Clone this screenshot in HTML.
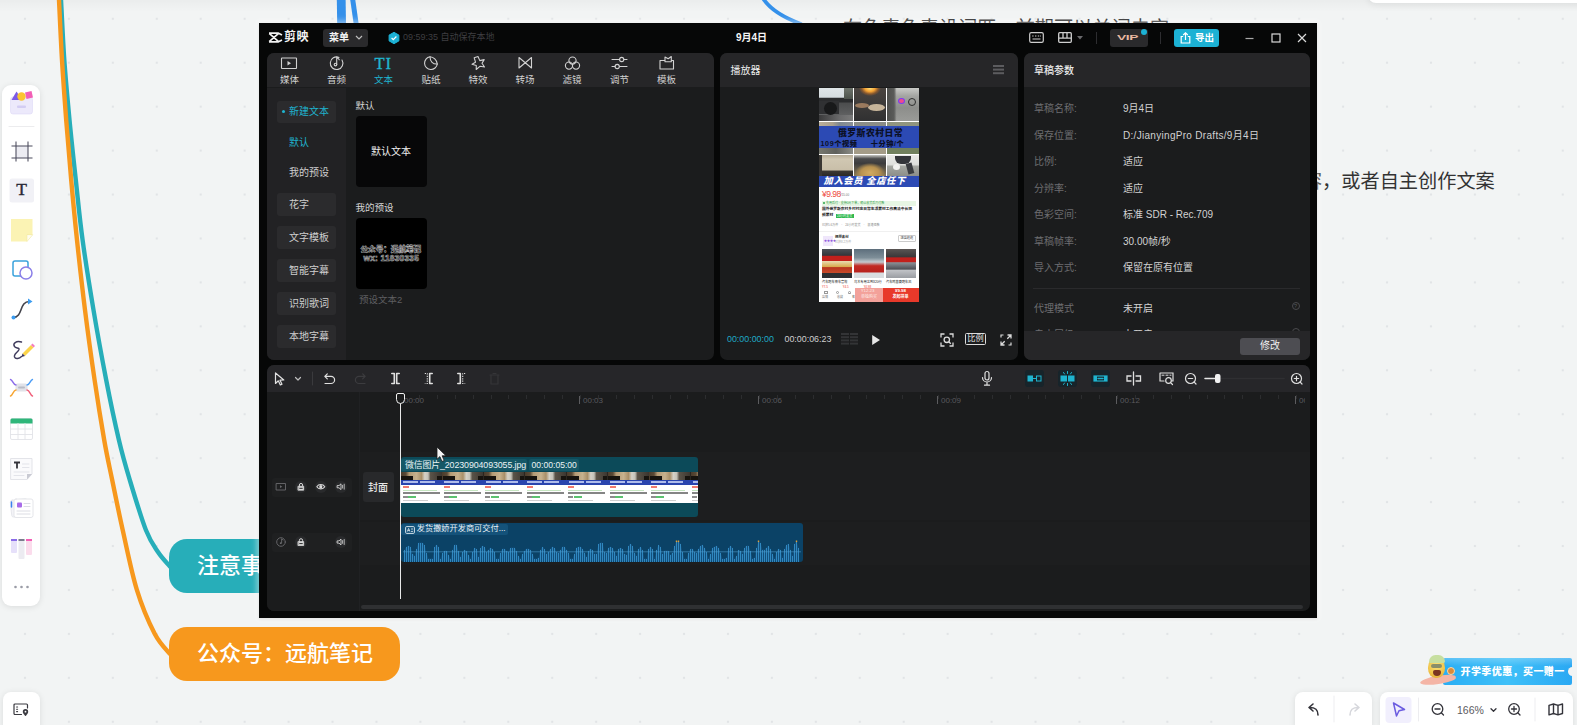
<!DOCTYPE html>
<html lang="zh-CN">
<head>
<meta charset="utf-8">
<title>剪映 - 9月4日</title>
<style>
*{box-sizing:border-box;margin:0;padding:0}
html,body{width:1577px;height:725px;overflow:hidden}
body{position:relative;background-color:#f2f4f4;font-family:"Liberation Sans","Noto Sans CJK SC",sans-serif;
background-image:radial-gradient(circle,#e1e4e6 0,#e1e4e6 .9px,rgba(225,228,230,0) 1.6px);background-size:43.94px 43.94px;background-position:3.0px -3.2px}
.a{position:absolute}
.t{position:absolute;white-space:nowrap;line-height:1}
svg{position:absolute;overflow:visible}
/* ---------- board ---------- */
.card{position:absolute;background:#fff;border-radius:8px;box-shadow:0 1px 6px rgba(0,0,0,.10)}
.node{position:absolute;color:#fff;font-size:22px;font-weight:500;line-height:53px;height:54.5px;padding-left:28.5px;white-space:nowrap}
/* ---------- app window ---------- */
#win{left:259px;top:23px;width:1058px;height:595px;background:#060707;box-shadow:0 0 6px 2px rgba(255,255,255,.5),0 1px 3px rgba(0,0,0,.15)}
.pn{position:absolute;background:#1b1c1d;border-radius:7px;overflow:hidden}
.hd{position:absolute;left:0;top:0;right:0;height:34.4px;background:#262628}
.w{color:#e6e6e6}.g{color:#6d6d70}.c{color:#1fb4cf}
.f10{font-size:10px}.f95{font-size:9.5px}
.sb{position:absolute;left:10px;width:59px;height:22px;background:#2b2b2d;border-radius:3px}
</style>
</head>
<body>
<!-- BOARD -->
<div id="board" class="a" style="left:0;top:0;width:1577px;height:725px">
<div class="a" style="left:0;top:0;width:1577px;height:12px;background:linear-gradient(180deg,rgba(0,0,0,.03),rgba(0,0,0,0))"></div>
<!-- mind map connectors -->
<svg width="1577" height="725" style="left:0;top:0" fill="none" stroke-linecap="round">
  <path d="M60.3,-10.0 C60.4,-8.3 60.3,-11.7 61.0,0.0 C61.7,11.7 62.9,40.0 64.3,60.0 C65.7,80.0 67.6,100.0 69.5,120.0 C71.4,140.0 73.6,160.0 75.8,180.0 C78.0,200.0 79.6,218.3 82.6,240.0 C85.5,261.7 89.6,286.7 93.5,310.0 C97.4,333.3 102.0,358.3 106.2,380.0 C110.4,401.7 115.0,423.3 118.9,440.0 C122.8,456.7 125.3,465.0 129.8,480.0 C134.3,495.0 141.2,518.0 145.9,530.0 C150.6,542.0 154.0,545.9 158.0,552.0 C162.0,558.1 168.0,564.1 170.0,566.5" stroke="#27aeb9" stroke-width="4.4"/>
  <path d="M58.6,-10.0 C58.7,-8.3 58.4,-11.7 59.0,0.0 C59.6,11.7 60.8,40.0 62.0,60.0 C63.2,80.0 64.7,100.0 66.2,120.0 C67.7,140.0 69.4,160.0 71.2,180.0 C73.0,200.0 74.7,218.3 77.0,240.0 C79.3,261.7 82.1,286.7 85.0,310.0 C87.9,333.3 91.4,358.3 94.6,380.0 C97.8,401.7 101.3,423.3 104.2,440.0 C107.1,456.7 109.1,465.0 112.2,480.0 C115.3,495.0 118.6,511.7 122.7,530.0 C126.8,548.3 131.5,572.3 136.8,589.6 C142.1,606.9 149.2,623.1 154.7,633.8 C160.2,644.5 167.4,650.6 170.0,654.0" stroke="#f7981d" stroke-width="4.4"/>
  <path d="M341.2,-2 L341.6,24" stroke="#3490ea" stroke-width="8.8" stroke-linecap="butt"/>
  <path d="M352.5,-2 L356.2,24" stroke="#3490ea" stroke-width="5" stroke-linecap="butt"/>
  <path d="M762.8,-2 C769,8 782,17 801,24" stroke="#3490ea" stroke-width="3.8"/>
</svg>
<!-- hidden-behind-window text lines -->
<div class="t" style="left:843px;top:19.2px;font-size:19.2px;color:#222">在免责免责设词匹，前期可以关词去字</div>
<div class="t" style="left:1207px;top:171.5px;font-size:19.2px;color:#333;letter-spacing:0">选择文案内容，或者自主创作文案</div>
<!-- top right floating shadow -->
<div class="card" style="left:1368px;top:-27px;width:230px;height:30px;box-shadow:0 2px 7px rgba(0,0,0,.07)"></div>
<!-- nodes -->
<div class="node" style="left:168.5px;top:538.5px;width:300px;background:#27aeb9;border-radius:18px">注意事项</div>
<div class="node" style="left:168.5px;top:626.5px;width:231.5px;background:#f7981d;border-radius:18px">公众号：远航笔记</div>
<!-- left toolbar -->
<div class="card" style="left:2px;top:84.500px;width:38px;height:521px;border-radius:9px"></div>
<div class="card" style="left:3px;top:692px;width:37px;height:40px"></div>
<!-- bottom right -->
<div class="card" style="left:1295px;top:692px;width:77px;height:40px"></div>
<div class="card" style="left:1380px;top:692px;width:193px;height:40px"></div>
<!-- left toolbar icons -->
<svg style="left:3px;top:83px" width="37" height="522" viewBox="0 0 37 522" fill="none" stroke-linecap="round" stroke-linejoin="round">
  <!-- shapes library -->
  <rect x="7.500" y="14" width="22" height="17" rx="2.500" fill="#ece9fb" stroke="#ded9f6" stroke-width=".6"/>
  <rect x="14" y="22.500" width="9" height="2.500" rx="1" fill="#d3cdf3"/>
  <path d="M8.500,17 L13.500,8.500 L19,17 Z" fill="#7d5be6"/><circle cx="18.500" cy="13.500" r="4.200" fill="#fbc531"/><path d="M22,9.500 L28.500,8 L30,14.500 L23.500,16 Z" fill="#f25fb6"/>
  <path d="M6,43.500 H31" stroke="#ececee" stroke-width="1"/>
  <!-- frame -->
  <rect x="13" y="63" width="12" height="12" fill="#ececf2" stroke="none"/>
  <path d="M13,58.500 V78.500 M25,58.500 V78.500 M8.500,63 H29.500 M8.500,75 H29.500" stroke="#4a4a5c" stroke-width="1.050" stroke-linecap="butt"/>
  <!-- text T -->
  <rect x="6.500" y="95.500" width="24.500" height="24" rx="2.500" fill="#f1f1f6"/>
  <!-- sticky -->
  <path d="M8,136 H29.500 V152 L24,158.500 H8 Z" fill="#fbf3b4"/><path d="M29.500,152 L24,158.500 V152 Z" fill="#fffdf0" stroke="#efe6a0" stroke-width=".5"/>
  <!-- shapes -->
  <rect x="10" y="178" width="15" height="15" rx="2" stroke="#3aa2dc" stroke-width="1.500" fill="#fff"/><circle cx="23" cy="190" r="6" stroke="#8b7fe8" stroke-width="1.500" fill="#fff"/>
  <!-- connector -->
  <path d="M10.500,234.500 C20,234.500 16,218.500 26.500,218.500" stroke="#44444c" stroke-width="1.600"/><circle cx="10.500" cy="234.500" r="2" fill="#3b9cf0"/><path d="M25,215.500 L29.500,218.500 L25,221.500 Z" fill="#3b9cf0"/>
  <!-- pen -->
  <path d="M18.500,259 C13,257.500 9.500,260.500 11.500,263.500 C13,265.500 16.500,264.500 16,266.500 C15,269.500 10.500,270.500 11.500,274 C12.500,276.500 16.500,275.500 18.500,273.500" stroke="#3f3b5c" stroke-width="1.400"/>
  <path d="M19.500,270.500 L28,262 L30.500,264.500 L22,273 Z" fill="#fbd34a"/><path d="M28,262 L29.500,260.500 L32,263 L30.500,264.500 Z" fill="#f47cc0"/><path d="M19.500,270.500 L18.500,274 L22,273 Z" fill="#3a3560"/>
  <!-- mind map -->
  <rect x="12.500" y="300.500" width="12" height="8" rx="2" fill="#e1e2e8"/><rect x="15" y="303.500" width="7" height="2" rx="1" fill="#b9bbc6"/>
  <path d="M13,302 C10,302 10,297 7.500,296.500" stroke="#8a6be8" stroke-width="1.400"/><path d="M24,302 C27,302 27,297 29.500,296.500" stroke="#4b9cf5" stroke-width="1.400"/>
  <path d="M13,307 C10,307 10,312.500 7.500,313" stroke="#f7a531" stroke-width="1.400"/><path d="M24,307 C27,307 27,312.500 29.500,313" stroke="#f0607a" stroke-width="1.400"/>
  <!-- table -->
  <rect x="7.500" y="335.500" width="22" height="21" rx="1.500" fill="#fff" stroke="#e2e3e8" stroke-width=".9"/><path d="M7.500,337 A1.500,1.500 0 0 1 9,335.500 H28 A1.500,1.500 0 0 1 29.500,337 V340.500 H7.500 Z" fill="#2fb67a"/>
  <path d="M7.500,346 H29.500 M7.500,351.500 H29.500 M15,340.500 V356.500 M22,340.500 V356.500" stroke="#e2e3e8" stroke-width=".9"/>
  <!-- doc -->
  <path d="M8,375.500 H29 V391 L24,396.500 H8 Z" fill="#fafafc" stroke="#e0e1e7" stroke-width=".9"/><path d="M29,391 L24,396.500 V391 Z" fill="#c9cad3"/>
  <path d="M11,379.500 H17 M14,379.500 V385.500" stroke="#33333a" stroke-width="1.800" stroke-linecap="butt"/><path d="M19.500,381 H26 M19.500,384.500 H26 M11,389 H26 M11,392.500 H21" stroke="#e3e4ea" stroke-width="1"/>
  <!-- cards -->
  <rect x="8" y="416.500" width="17" height="17" rx="2" fill="#f4f4f8" stroke="#e2e3e8" stroke-width=".8" transform="rotate(-6 16 425)"/><rect x="11" y="416" width="19" height="18.500" rx="2" fill="#fff" stroke="#e2e3e8" stroke-width=".9"/>
  <rect x="14" y="419.500" width="5" height="5" rx="1" fill="#a86be8"/><path d="M8.500,419 V424" stroke="#3b82f0" stroke-width="1.500"/><path d="M21,420.500 H27 M21,423.500 H27 M14,428 H27 M14,431 H27" stroke="#dcdde4" stroke-width="1"/>
  <!-- kanban -->
  <rect x="8" y="456" width="6" height="14" rx="1" fill="#e6e0fa"/><rect x="15.500" y="456" width="6" height="20" rx="1" fill="#ecebf1"/><rect x="23" y="456" width="6" height="16" rx="1" fill="#fbdcec"/>
  <path d="M8,457 H14" stroke="#8a6be8" stroke-width="2" stroke-linecap="butt"/><path d="M15.500,457 H21.500" stroke="#7a7c8c" stroke-width="2" stroke-linecap="butt"/><path d="M23,457 H29" stroke="#f25fb6" stroke-width="2" stroke-linecap="butt"/>
  <!-- more -->
  <circle cx="12.500" cy="504" r="1.300" fill="#9a9ca6"/><circle cx="18.500" cy="504" r="1.300" fill="#9a9ca6"/><circle cx="24.500" cy="504" r="1.300" fill="#9a9ca6"/>
</svg>
<div class="t" style="left:16.200px;top:181.300px;font-family:'Liberation Serif',serif;font-weight:400;font-size:17.500px;color:#2a2a36;-webkit-text-stroke:.4px #2a2a36">T</div>
<!-- bottom-left button -->
<svg style="left:12px;top:702px" width="18" height="15" viewBox="0 0 18 15" fill="none" stroke="#3a3a40" stroke-width="1.200" stroke-linejoin="round" stroke-linecap="round"><path d="M9.500,12.500 H3 A1,1 0 0 1 2,11.500 V3 A1,1 0 0 1 3,2 H14.500 A1,1 0 0 1 15.500,3 V6"/><path d="M4.600,5 H5.600 M4.600,7.300 H5.600 M4.600,9.600 H5.600" stroke-width="1.100"/><path d="M13.500,7 A2.700,2.700 0 0 1 16.200,9.700 C16.200,11.500 13.500,14 13.500,14 C13.500,14 10.800,11.500 10.800,9.700 A2.700,2.700 0 0 1 13.500,7 Z" fill="#3a3a40" stroke="none"/><circle cx="13.500" cy="9.700" r=".9" fill="#fff" stroke="none"/></svg>
<!-- bottom-right toolbars -->
<svg style="left:1295px;top:692px" width="280" height="33" viewBox="0 0 280 33" fill="none" stroke="#33333a" stroke-width="1.600" stroke-linecap="round" stroke-linejoin="round">
  <path d="M39,4 V30" stroke="#ededf0" stroke-width="1"/>
  <path d="M23,23 C23,17.500 20.500,15.500 14.500,15.500 M18,12 L14,15.500 L18,19"/>
  <path d="M55,23 C55,17.500 57.500,15.500 63.500,15.500 M60,12 L64,15.500 L60,19" stroke="#d6d7dc"/>
  <rect x="90.500" y="5" width="26" height="26" rx="4" fill="#f1effd" stroke="none"/>
  <path d="M98.500,11 L109.500,17.500 L104,18.800 L101.500,24 Z" stroke="#6b5ce0" stroke-width="1.500"/>
  <path d="M123.500,6 V29" stroke="#ededf0" stroke-width="1"/>
  <circle cx="142.500" cy="17" r="5.300" stroke-width="1.300"/><path d="M140,17 H145 M146.500,21 L148.500,23" stroke-width="1.300"/>
  <path d="M196,16.800 L198.500,19.300 L201,16.800" stroke-width="1.300"/>
  <circle cx="219" cy="17" r="5.300" stroke-width="1.300"/><path d="M216.500,17 H221.500 M219,14.500 V19.500 M223,21 L225,23" stroke-width="1.300"/>
  <path d="M240,6 V29" stroke="#ededf0" stroke-width="1"/>
  <path d="M254,13.300 L258.500,12 L263,13.300 L267.500,12 V21.500 L263,22.800 L258.500,21.500 L254,22.800 Z M258.500,12 V21.500 M263,13.300 V22.800" stroke-width="1.400"/>
</svg>
<div class="t" style="left:1457px;top:705px;font-size:10.500px;color:#5a5a60">166%</div>
<!-- promo banner -->
<div class="a" style="left:1443px;top:658px;width:129px;height:27px;border-radius:2px;background:linear-gradient(180deg,rgba(255,255,255,.25) 0,rgba(255,255,255,0) 30%),linear-gradient(90deg,#2aaef4 0,#3fc0f8 50%,#2aa8f3 100%)"></div>
<div class="a" style="left:1420px;top:676px;width:36px;height:8px;border-radius:60% 50% 50% 60%;background:#f4b5a6;transform:rotate(-9deg)"></div>
<div class="a" style="left:1428px;top:657px;width:17px;height:21px;border-radius:50% 50% 45% 45%;background:radial-gradient(circle at 50% 40%,#fae27c 0,#f0c347 60%,#d9a03a 100%)"></div>
<div class="a" style="left:1428.500px;top:654.500px;width:16px;height:8px;border-radius:9px 9px 2px 2px;background:#c7dfa0"></div>
<div class="a" style="left:1431px;top:663.500px;width:11px;height:4px;border-radius:2px;background:#8a8f6a"></div>
<div class="a" style="left:1433px;top:670px;width:8px;height:6px;border-radius:2px 2px 4px 4px;background:#7a3422"></div>
<div class="a" style="left:1446.500px;top:666.500px;width:8px;height:8px;border-radius:4px;background:#d98a3a;border:1px solid #f6dcae"></div>
<div class="t" style="left:1460.500px;top:666.500px;font-size:10px;font-weight:900;color:#fff;letter-spacing:.42px">开学季优惠，买一赠一</div>
<div class="a" style="left:1568px;top:667px;width:6px;height:9px;border-radius:5px 0 0 5px;background:#f2f4f4"></div>
</div>
<!-- WINDOW -->
<div id="win" class="a"></div>
<div id="app" class="a" style="left:0;top:0;width:1577px;height:725px">
<!-- ===== title bar ===== -->
<svg style="left:268px;top:32px" width="15" height="11" viewBox="0 0 15 11" fill="none" stroke="#f2f2f2" stroke-width="1.7" stroke-linejoin="round"><path d="M1,1.2 H10.5 L14,3 M1,9.8 H10.5 L14,8 M1.2,1.3 L10.6,9.6 M1.2,9.7 L10.6,1.4"/></svg>
<div class="t" style="left:284px;top:31px;font-size:12px;font-weight:700;color:#f2f2f2;letter-spacing:.5px">剪映</div>
<div class="a" style="left:323px;top:29px;width:45px;height:18px;background:#2a2a2c;border-radius:3px"></div>
<div class="t" style="left:329px;top:32.5px;font-size:10px;font-weight:700;color:#f2f2f2">菜单</div>
<svg style="left:355px;top:35px" width="8" height="5" viewBox="0 0 8 5" fill="none" stroke="#bdbdbd" stroke-width="1.2"><path d="M1,1 L4,4 L7,1"/></svg>
<svg style="left:388px;top:32px" width="12" height="12" viewBox="0 0 12 12"><path d="M6,0.3 L10.9,3.1 V8.9 L6,11.7 L1.1,8.9 V3.1 Z" fill="#1cb1d4" stroke="#1cb1d4" stroke-width="1" stroke-linejoin="round"/><path d="M3.6,6 L5.3,7.7 L8.4,4.5" fill="none" stroke="#fff" stroke-width="1.2"/></svg>
<div class="t" style="left:403px;top:33px;font-size:9px;color:#3e3e41">09:59:35 自动保存本地</div>
<div class="t" style="left:736px;top:32.5px;font-size:10px;font-weight:700;color:#f5f5f5">9月4日</div>
<!-- right icons -->
<svg style="left:1029px;top:32px" width="15" height="11" viewBox="0 0 15 11" fill="none" stroke="#cfcfcf" stroke-width="1.2"><rect x=".7" y=".7" width="13.6" height="9.6" rx="1.6"/><path d="M3.2,4 H4.6 M6,4 H7.4 M8.8,4 H10.2 M11.2,4 H12 M3.5,7 H11.5" stroke-width="1.1"/></svg>
<svg style="left:1058px;top:32px" width="14" height="11" viewBox="0 0 14 11" fill="none" stroke="#cfcfcf" stroke-width="1.3"><rect x=".7" y=".7" width="12.6" height="9.6" rx="1"/><path d="M.7,6.2 H13.3 M5,.7 V6.2 M9,.7 V6.2"/></svg>
<svg style="left:1077px;top:36px" width="6" height="4" viewBox="0 0 6 4"><path d="M0,0 H6 L3,3.6 Z" fill="#6a6a6d"/></svg>
<div class="a" style="left:1096px;top:32px;width:1px;height:12px;background:#2d2d30"></div>
<div class="a" style="left:1110px;top:29px;width:38px;height:18px;background:#2a2a2c;border-radius:3px"></div>
<div class="t" style="left:1117px;top:33.8px;font-size:8px;font-weight:700;color:#e9b8a0;letter-spacing:-.2px;transform:scaleX(1.72);transform-origin:0 0">VIP</div>
<div class="a" style="left:1141px;top:29px;width:6px;height:6px;border-radius:3px;background:#1cb1d4"></div>
<div class="a" style="left:1160px;top:32px;width:1px;height:12px;background:#2d2d30"></div>
<div class="a" style="left:1174px;top:29px;width:45px;height:18px;background:#1cb1d4;border-radius:3px"></div>
<svg style="left:1180px;top:32px" width="11" height="12" viewBox="0 0 11 12" fill="none" stroke="#fff" stroke-width="1.2"><path d="M3.2,4.5 H1.2 V11 H9.8 V4.5 H7.8 M5.5,8 V1 M3.2,3 L5.5,.8 L7.8,3"/></svg>
<div class="t" style="left:1195px;top:33px;font-size:9.5px;font-weight:700;color:#fff">导出</div>
<svg style="left:1243px;top:31px" width="66" height="14" viewBox="0 0 66 14" fill="none" stroke="#d9d9d9" stroke-width="1.2"><path d="M2.5,7.5 H10.5" stroke="#a8a8a8"/><rect x="29" y="3" width="8" height="8"/><path d="M55,3 L63,11 M63,3 L55,11"/></svg>
<!-- ===== left panel (media / text) ===== -->
<div class="pn" style="left:267px;top:52.6px;width:447px;height:307.4px">
  <div class="hd"></div>
  <div class="a" style="left:0;top:35px;width:79px;height:273px;background:#222224"></div>
  <!-- side menu -->
  <div class="sb" style="top:48px"></div>
  <div class="a" style="left:15px;top:57.5px;width:3px;height:3px;border-radius:2px;background:#1fb4cf"></div>
  <div class="t c f10" style="left:22px;top:54px">新建文本</div>
  <div class="t c f10" style="left:22px;top:85.5px">默认</div>
  <div class="t f10" style="left:22px;top:115px;color:#cfcfcf">我的预设</div>
  <div class="sb" style="top:140.5px;height:23px"></div><div class="t f10" style="left:22px;top:147.3px;color:#cfcfcf">花字</div>
  <div class="sb" style="top:173.5px;height:23px"></div><div class="t f10" style="left:22px;top:180.3px;color:#cfcfcf">文字模板</div>
  <div class="sb" style="top:206.5px;height:23px"></div><div class="t f10" style="left:22px;top:213.3px;color:#cfcfcf">智能字幕</div>
  <div class="sb" style="top:239.5px;height:23px"></div><div class="t f10" style="left:22px;top:246.3px;color:#cfcfcf">识别歌词</div>
  <div class="sb" style="top:272.5px;height:23px"></div><div class="t f10" style="left:22px;top:279.3px;color:#cfcfcf">本地字幕</div>
  <!-- content -->
  <div class="t" style="left:88.5px;top:48.8px;font-size:9.5px;color:#d6d6d6">默认</div>
  <div class="a" style="left:88.5px;top:63.8px;width:71.5px;height:71px;background:#070708;border-radius:4px"></div>
  <div class="t" style="left:104px;top:94.8px;font-size:10px;color:#f0f0f0">默认文本</div>
  <div class="t" style="left:88.5px;top:150.8px;font-size:9.5px;color:#d6d6d6">我的预设</div>
  <div class="a" style="left:88.5px;top:165.8px;width:71.5px;height:71px;background:#000;border-radius:4px"></div>
  <div class="t" style="left:93.5px;top:193.3px;font-size:7.7px;font-weight:900;color:#000;-webkit-text-stroke:.55px #b8b8b8;letter-spacing:-.1px">公众号：远航笔记</div>
  <div class="t" style="left:96.5px;top:201.8px;font-size:8.4px;font-weight:700;color:#000;-webkit-text-stroke:.55px #b8b8b8;letter-spacing:.2px">wx: 11830335</div>
  <div class="t" style="left:92px;top:242.8px;font-size:9.5px;color:#5e5e61">预设文本2</div>
</div>
<!-- tabs -->
<div class="t f95" style="left:280px;top:74.5px;color:#d2d2d2">媒体</div>
<div class="t f95" style="left:327px;top:74.5px;color:#d2d2d2">音频</div>
<div class="t f95 c" style="left:374px;top:74.5px">文本</div>
<div class="t f95" style="left:421.5px;top:74.5px;color:#d2d2d2">贴纸</div>
<div class="t f95" style="left:468.5px;top:74.5px;color:#d2d2d2">特效</div>
<div class="t f95" style="left:515.5px;top:74.5px;color:#d2d2d2">转场</div>
<div class="t f95" style="left:562.5px;top:74.5px;color:#d2d2d2">滤镜</div>
<div class="t f95" style="left:610px;top:74.5px;color:#d2d2d2">调节</div>
<div class="t f95" style="left:657px;top:74.5px;color:#d2d2d2">模板</div>
<svg style="left:280px;top:55px" width="400" height="16" viewBox="0 0 400 16" fill="none" stroke="#d2d2d2" stroke-width="1.1" stroke-linejoin="round" stroke-linecap="round">
  <!-- media -->
  <rect x="1.5" y="3" width="15" height="10.5" rx=".5"/><path d="M7.5,6 L11,8.2 L7.5,10.4 Z" fill="#d2d2d2" stroke="none"/>
  <!-- audio -->
  <path d="M59,2.4 A6.3,6.3 0 1 0 62,5"/><path d="M56.7,9.6 V2 C57.5,3.3 59,3.6 59.3,4.8"/><circle cx="55.5" cy="9.6" r="1.3"/>
  <!-- sticker -->
  <path d="M150,1.8 A6.4,6.4 0 1 0 157.3,9 C153,9.3 150,6.5 150,1.8 Z"/><path d="M150,1.8 C153.5,2 156.8,5 157.3,9"/>
  <!-- effects star -->
  <path d="M198,1.5 L199.8,5.6 L204.2,4.6 L202,8.3 L204.5,12 L200.2,11.2 L196.2,14.5 L196.3,10.5 L192,9.2 L195.5,7.2 L194.2,2.8 Z"/>
  <!-- transition -->
  <path d="M239,2.5 L251.5,13 V2.5 L239,13 Z"/>
  <!-- filter -->
  <circle cx="292.5" cy="5.6" r="3.6"/><circle cx="289" cy="10.6" r="3.6"/><circle cx="296" cy="10.6" r="3.6"/>
  <!-- adjust -->
  <path d="M332,4.5 H339.5 M344,4.5 H347 M332,11.5 H335 M339.5,11.5 H347"/><circle cx="341.7" cy="4.5" r="2.1"/><circle cx="337.2" cy="11.5" r="2.1"/>
  <!-- template -->
  <path d="M384.5,5.5 H380 V14 H393.5 V5.5 H391.5 M385,5.3 V2 L388.2,3.8 L391.3,1.5 V6.8 H385 Z"/>
</svg>
<div class="t" style="left:374.5px;top:55.5px;font-family:'Liberation Serif',serif;font-size:16.5px;color:#1fb4cf;letter-spacing:.8px;-webkit-text-stroke:.35px #1fb4cf">TI</div>
<!-- ===== player panel ===== -->
<div class="pn" style="left:720px;top:52.6px;width:298px;height:307.4px">
  <div class="hd"></div>
  <div class="t" style="left:10.5px;top:13.5px;font-size:10px;color:#ededed">播放器</div>
  <div class="a" style="left:273px;top:12.8px;width:11px;height:1.4px;background:#5c5c5f;box-shadow:0 3.6px 0 #5c5c5f,0 7.2px 0 #5c5c5f"></div>
  <!-- preview (x 99..199, y 36..250) -->
  <div class="a" id="pv" style="left:99px;top:35.2px;width:100px;height:214px;background:#fff;overflow:hidden">
    <!-- photo collage top -->
    <div class="a" style="left:0;top:0;width:34px;height:33px;background:linear-gradient(180deg,#dfe5e8 0,#d5dcdf 28%,#2b2c2e 31%,#2b2c2e 42%,#4c4d4e 46%,#58595a 70%,#6b6c6c 100%)"></div>
    <div class="a" style="left:25px;top:0;width:9px;height:11px;background:linear-gradient(180deg,#6d736b,#4d524c)"></div>
    <div class="a" style="left:0;top:13px;width:20px;height:13px;background:#303133"></div>
    <div class="a" style="left:5px;top:14px;width:13px;height:13px;border-radius:50%;background:#18191a"></div>
    <div class="a" style="left:0;top:27px;width:34px;height:6px;background:linear-gradient(90deg,#3a3a3b,#69696a 60%,#7a7a7a)"></div>
    <div class="a" style="left:35px;top:0;width:32px;height:33px;background:radial-gradient(ellipse 11px 8px at 50% 0,#ffe27a 0,#f3a234 45%,rgba(200,110,30,.5) 75%,rgba(60,50,45,0) 100%),linear-gradient(180deg,#4a4440 0,#3d3b3a 50%,#303031 100%)"></div>
    <div class="a" style="left:36px;top:15px;width:14px;height:5px;border-radius:50%;background:#9a7a5e"></div>
    <div class="a" style="left:49px;top:16px;width:17px;height:7px;border-radius:50%;background:#c7b59a"></div>
    <div class="a" style="left:68px;top:0;width:32px;height:33px;background:linear-gradient(90deg,#4e4f4d 0,#5a5b59 22%,rgba(0,0,0,0) 30%),linear-gradient(180deg,#c9cac7 0,#a3a4a1 25%,#8d8e8b 60%,#9a9b98 100%)"></div>
    <div class="a" style="left:78.500px;top:10.500px;width:7px;height:6px;border-radius:50%;background:#7a3df0"></div>
    <div class="a" style="left:80px;top:11.500px;width:5px;height:4px;border-radius:50%;background:#f04a8c"></div>
    <div class="a" style="left:88.500px;top:10px;width:8px;height:8px;border-radius:50%;border:1px solid #2e2f2e"></div>
    <div class="a" style="left:0;top:34px;width:34px;height:5px;background:linear-gradient(90deg,#b9ae9a 0,#a9a08e 40%,#7f8890 60%,#8d9296 100%)"></div>
    <div class="a" style="left:35px;top:34px;width:32px;height:5px;background:#8b8d87"></div>
    <div class="a" style="left:68px;top:34px;width:32px;height:5px;background:#90957f"></div>
    <!-- blue band 1 -->
    <div class="a" style="left:0;top:38.500px;width:100px;height:21.500px;background:#2c4ab4"></div>
    <div class="t" style="left:19px;top:41.200px;font-size:8.800px;font-weight:900;color:#0b1026;letter-spacing:.5px">俄罗斯农村日常</div>
    <div class="t" style="left:1.500px;top:52px;font-size:7.200px;font-weight:900;color:#0b1026;letter-spacing:.6px">109个视频　 &nbsp;十分钟/个</div>
    <!-- photos row 2 -->
    <div class="a" style="left:0;top:60px;width:34px;height:6px;background:linear-gradient(90deg,#77786f,#5f605c 50%,#8b8c86)"></div>
    <div class="a" style="left:35px;top:60px;width:32px;height:6px;background:#a49c88"></div>
    <div class="a" style="left:68px;top:60px;width:32px;height:6px;background:#71805e"></div>
    <div class="a" style="left:0;top:67px;width:34px;height:21.500px;background:linear-gradient(180deg,#b5ab96 0,#d0c7b2 20%,#c9bfa9 70%,#3a3733 78%,#2b2927 100%)"></div>
    <div class="a" style="left:0;top:67px;width:2.500px;height:21.500px;background:#3a3733"></div>
    <div class="a" style="left:35px;top:67px;width:32px;height:21.500px;background:radial-gradient(ellipse 15px 10px at 50% 85%,#d2ab62 0,#b89250 60%,rgba(120,100,70,0) 100%),linear-gradient(180deg,#c9c9c4 0,#4a4a4b 18%,#3c3c3d 40%,#8d7b56 100%)"></div>
    <div class="a" style="left:68px;top:67px;width:32px;height:21.500px;background:linear-gradient(180deg,#e9e9e7 0,#dedfdc 45%,#a3a5a0 55%,#8c8e89 100%)"></div>
    <div class="a" style="left:76px;top:68px;width:16px;height:8px;border-radius:0 0 6px 6px;background:#33353a"></div>
    <div class="a" style="left:88px;top:75px;width:6px;height:11px;background:#3a3c40;transform:rotate(-15deg)"></div>
    <div class="a" style="left:74px;top:76px;width:7px;height:6px;border-radius:50%;background:#f1f1ef"></div>
    <!-- blue band 2 -->
    <div class="a" style="left:0;top:88.500px;width:100px;height:11px;background:#2c4ab4"></div>
    <div class="t" style="left:4.500px;top:89.300px;font-size:9.200px;font-weight:900;font-style:italic;color:#fff;letter-spacing:.7px">加入会员 全店任下</div>
    <!-- price & text -->
    <div class="t" style="left:3px;top:102px;font-size:8.5px;color:#ee4a40;letter-spacing:-.5px">¥9.98</div>
    <div class="t" style="left:21px;top:106px;font-size:3px;color:#777">¥15.00</div>
    <div class="a" style="left:3px;top:113px;width:94px;height:5px;background:#e7f6e4"></div>
    <div class="a" style="left:4px;top:114.5px;width:2px;height:2px;border-radius:1px;background:#2da44a"></div>
    <div class="t" style="left:7px;top:114px;font-size:3px;color:#2f9c46">先用后付 · 支持0元下单，确认收货后再付款</div>
    <div class="t" style="left:3px;top:120.3px;font-size:3.75px;font-weight:700;color:#222">国外俄罗斯农村乡村村庄日常生活素材工作高清中长视</div>
    <div class="t" style="left:3px;top:126.3px;font-size:3.75px;font-weight:700;color:#222">频素材</div>
    <div class="a" style="left:17px;top:126px;width:18px;height:4.5px;background:#2db84d"></div>
    <div class="t" style="left:18px;top:126.8px;font-size:3px;color:#fff">24小时发货</div>
    <div class="t" style="left:3px;top:136px;font-size:3px;color:#888">已拼5.6万件　·　24小时发货　·　极速退款</div>
    <div class="a" style="left:0;top:143px;width:100px;height:1.5px;background:#f0f0f0"></div>
    <div class="a" style="left:4px;top:148px;width:10px;height:10px;background:#efe6fb"></div>
    <div class="t" style="left:5px;top:152px;font-size:3px;color:#8b52dd">★★★★</div>
    <div class="t" style="left:16px;top:148px;font-size:3.4px;font-weight:700;color:#222">拥原素材</div>
    <div class="t" style="left:16px;top:153.5px;font-size:3px;color:#aaa">已拼8.2万件</div>
    <div class="a" style="left:79px;top:147.5px;width:18px;height:7px;border:.5px solid #ccc;border-radius:1px"></div>
    <div class="t" style="left:81.5px;top:149.5px;font-size:3.2px;color:#333">进店逛逛</div>
    <!-- products -->
    <div class="a" style="left:3px;top:161px;width:30px;height:29px;background:linear-gradient(180deg,#4d5157 0,#33363b 22%,#c2201c 24%,#c2201c 40%,#e8d9b0 42%,#d8a84a 62%,#b9341f 64%,#c64a2a 82%,#2d2f33 84%)"></div>
    <div class="a" style="left:35px;top:161px;width:30px;height:29px;background:linear-gradient(180deg,#5d6e7c 0,#7e8e98 30%,#c4cbd0 45%,#c22a24 58%,#b8221e 80%,#d9dde0 82%)"></div>
    <div class="a" style="left:67px;top:161px;width:30px;height:29px;background:linear-gradient(180deg,#5a5554 0,#3a3738 28%,#c2201c 30%,#c2201c 45%,#8a8f96 47%,#4d4f55 70%,#c2c4c8 72%,#9a9da3 100%)"></div>
    <div class="t" style="left:3px;top:193.5px;font-size:3.2px;color:#222">汽车跑车豪车音效</div>
    <div class="t" style="left:35px;top:193.5px;font-size:3.2px;color:#222">乌木专用达到320行</div>
    <div class="t" style="left:67px;top:193.5px;font-size:3.2px;color:#222">汽车鸣笛赛跑车风</div>
    <div class="t" style="left:3px;top:198.5px;font-size:3px;color:#ee3a30">¥7.5　　　　　¥4.5　　　　　¥4.98</div>
    <!-- bottom bar -->
    <div class="a" style="left:0;top:200px;width:100px;height:14px;background:#fff"></div>
    <div class="t" style="left:3px;top:208.5px;font-size:3px;color:#777">店铺　　　收藏　　　客服</div>
    <div class="a" style="left:5px;top:203px;width:3.5px;height:3.5px;border:.5px solid #999"></div>
    <div class="a" style="left:16.5px;top:203px;width:3.5px;height:3.5px;border:.5px solid #999;border-radius:2px"></div>
    <div class="a" style="left:28.5px;top:203px;width:3.5px;height:3.5px;border:.5px solid #999;border-radius:2px 2px 0 0"></div>
    <div class="a" style="left:36px;top:200px;width:28px;height:14px;background:#f3a19a"></div>
    <div class="a" style="left:64px;top:200px;width:36px;height:14px;background:#e8392a"></div>
    <div class="t" style="left:42px;top:201.5px;font-size:4.4px;color:#fde9e6">¥12.23</div>
    <div class="t" style="left:42px;top:207px;font-size:4px;color:#fde9e6">单独购买</div>
    <div class="t" style="left:76px;top:201.5px;font-size:4.4px;font-weight:700;color:#fff">¥9.98</div>
    <div class="t" style="left:73.5px;top:207px;font-size:4px;font-weight:700;color:#fff">发起拼单</div>
  </div>
  <!-- controls -->
  <div class="t" style="left:7px;top:282.5px;font-size:8.9px;color:#1fa9c4">00:00:00:00</div>
  <div class="t" style="left:64.5px;top:282.5px;font-size:8.9px;color:#cfcfcf">00:00:06:23</div>
  <div class="a" style="left:121px;top:280.5px;width:7.5px;height:1.7px;background:#333436;box-shadow:0 3.2px 0 #333436,0 6.4px 0 #333436,0 9.6px 0 #333436,9px 0 0 #333436,9px 3.2px 0 #333436,9px 6.4px 0 #333436,9px 9.6px 0 #333436"></div>
  <svg style="left:151px;top:281px" width="10" height="12" viewBox="0 0 10 12"><path d="M1.2,1 L9,6 L1.2,11 Z" fill="#e6e6e6"/></svg>
  <svg style="left:220px;top:280px" width="14" height="14" viewBox="0 0 14 14" fill="none" stroke="#dcdcdc" stroke-width="1.3"><path d="M1,4.5 V1 H4.5 M9.5,1 H13 V4.5 M13,9.5 V13 H9.5 M4.500,13 H1 V9.500"/><circle cx="6.800" cy="6.800" r="2.700"/><path d="M8.800,8.800 L10.800,10.800"/></svg>
  <div class="a" style="left:245px;top:280.8px;width:21px;height:11.6px;border:1.1px solid #dcdcdc;border-radius:1.5px"></div>
  <div class="t" style="left:247.3px;top:282.4px;font-size:8.2px;color:#e6e6e6">比例</div>
  <svg style="left:280px;top:281px" width="12" height="12" viewBox="0 0 12 12" fill="none" stroke="#dcdcdc" stroke-width="1.3"><path d="M7.500,1 H11 V4.500 M11,1 L7.300,4.700 M4.500,11 H1 V7.500 M1,11 L4.700,7.300"/><path d="M1,3.500 V1 H3.500 M11,8.500 V11 H8.500" stroke-width="1.200"/></svg>
</div>
<!-- ===== draft params panel ===== -->
<div class="pn" style="left:1024px;top:52.6px;width:286px;height:307.4px">
  <div class="hd"></div>
  <div class="t" style="left:10px;top:13.5px;font-size:10px;font-weight:500;color:#ededed">草稿参数</div>
  <div class="t g f10" style="left:10px;top:51.5px">草稿名称:</div><div class="t f10" style="left:99px;top:51.5px;color:#d2d2d2">9月4日</div>
  <div class="t g f10" style="left:10px;top:78px">保存位置:</div><div class="t f10" style="left:99px;top:78px;color:#d2d2d2;letter-spacing:.3px">D:/JianyingPro Drafts/9月4日</div>
  <div class="t g f10" style="left:10px;top:104.5px">比例:</div><div class="t f10" style="left:99px;top:104.5px;color:#d2d2d2">适应</div>
  <div class="t g f10" style="left:10px;top:131px">分辨率:</div><div class="t f10" style="left:99px;top:131px;color:#d2d2d2">适应</div>
  <div class="t g f10" style="left:10px;top:157.5px">色彩空间:</div><div class="t f10" style="left:99px;top:157.5px;color:#d2d2d2">标准 SDR - Rec.709</div>
  <div class="t g f10" style="left:10px;top:184px">草稿帧率:</div><div class="t f10" style="left:99px;top:184px;color:#d2d2d2">30.00帧/秒</div>
  <div class="t g f10" style="left:10px;top:210.5px">导入方式:</div><div class="t f10" style="left:99px;top:210.5px;color:#d2d2d2">保留在原有位置</div>
  <div class="a" style="left:9px;top:235px;width:267px;height:1px;background:#2a2a2c"></div>
  <div class="t g f10" style="left:10px;top:251px">代理模式</div><div class="t f10" style="left:99px;top:251px;color:#d2d2d2">未开启</div>
  <div class="a" style="left:267.5px;top:249px;width:8px;height:8px;border:1px solid #4a4a4d;border-radius:4px"></div>
  <div class="t" style="left:269.7px;top:250.3px;font-size:6px;color:#55555a">?</div>
  <div class="t g f10" style="left:10px;top:277.5px">自由层级</div><div class="t f10" style="left:99px;top:277.5px;color:#d2d2d2">未开启</div>
  <div class="a" style="left:267.5px;top:275.5px;width:8px;height:8px;border:1px solid #4a4a4d;border-radius:4px"></div>
  <div class="a" style="left:0;top:278px;width:286px;height:30px;background:#262628"></div>
  <div class="a" style="left:216px;top:285px;width:60px;height:17px;background:#4d4d52;border-radius:3px"></div>
  <div class="t" style="left:236px;top:288.5px;font-size:10px;color:#f0f0f0">修改</div>
</div>
<!-- ===== timeline ===== -->
<div class="pn" style="left:267px;top:365px;width:1043px;height:246px;background:#1b1c1d">
  <div class="a" style="left:0;top:0;width:1043px;height:27px;background:#262629"></div>
  <div class="a" style="left:0;top:27px;width:92px;height:219px;background:#1b1c1d"></div>
  <!-- track row bands -->
  <div class="a" style="left:93px;top:87px;width:950px;height:68px;background:#1d1e1f"></div>
  <div class="a" style="left:93px;top:157px;width:950px;height:43px;background:#1d1e1f"></div>
  <div class="a" style="left:92px;top:27px;width:1px;height:219px;background:#202123"></div>
  <!-- scrollbar -->
  <div class="a" style="left:94px;top:240px;width:942px;height:4px;border-radius:2px;background:#2f3032"></div>
</div>
<!-- toolbar icons (page coords) -->
<svg style="left:273px;top:371px" width="240" height="16" viewBox="0 0 240 16" fill="none" stroke="#e0e0e0" stroke-width="1.200" stroke-linejoin="round" stroke-linecap="round">
  <path d="M2.500,2 L2.500,12.500 L5.300,9.800 L7.300,14 L9,13.200 L7,9.200 L10.800,9 Z"/>
  <path d="M22.500,6.500 L25,9 L27.500,6.500" stroke="#bdbdbd"/>
  <path d="M39.500,1 V14" stroke="#3a3a3d" stroke-width="1"/>
  <path d="M52,12.500 H58 A3.600,3.600 0 0 0 58,5.300 H52 M54.300,2.800 L51.800,5.300 L54.300,7.800"/>
  <path d="M92,12.500 H86 A3.600,3.600 0 0 1 86,5.300 H92 M89.700,2.800 L92.200,5.300 L89.700,7.800" stroke="#3c3c3f"/>
  <!-- split -->
  <path d="M118.800,2.500 H121.300 V12.500 H118.800 M126.200,2.500 H123.700 V12.500 H126.200" stroke-width="1.600"/>
  <!-- split left -->
  <path d="M159.200,2.500 H156.700 V12.500 H159.200" stroke-width="1.600"/><path d="M151.800,2.500 H154.300 V12.500 H151.800" stroke-width="1.100" stroke-dasharray="1.200 1.200" stroke-linecap="butt"/>
  <!-- split right -->
  <path d="M184.800,2.500 H187.300 V12.500 H184.800" stroke-width="1.600"/><path d="M192.200,2.500 H189.700 V12.500 H192.200" stroke-width="1.100" stroke-dasharray="1.200 1.200" stroke-linecap="butt"/>
  <!-- delete -->
  <path d="M217,4 H226 M218,4 V13 H225 V4 M220,2.500 H223" stroke="#353538"/>
</svg>
<svg style="left:980px;top:370px" width="325" height="18" viewBox="0 0 325 18" fill="none" stroke="#e0e0e0" stroke-width="1.200" stroke-linecap="round">
  <!-- mic -->
  <rect x="5" y="1.500" width="4" height="8.500" rx="2"/><path d="M2.500,7.500 A4.500,4.500 0 0 0 11.500,7.500 M7,12 V15 M4.500,15.200 H9.500"/>
  <!-- 3 cyan toggles -->
  <rect x="45" y="0" width="19" height="17" rx="3" fill="#17242a" stroke="none"/>
  <rect x="78" y="0" width="19" height="17" rx="3" fill="#17242a" stroke="none"/>
  <rect x="111" y="0" width="19" height="17" rx="3" fill="#17242a" stroke="none"/>
  <g stroke="#1fb4cf" fill="#1fb4cf"><rect x="48" y="6" width="4.500" height="5" stroke-width="1"/><rect x="56.500" y="6" width="4.500" height="5" fill="none" stroke-width="1"/><path d="M52.500,8.500 H56.500"/></g>
  <g stroke="#1fb4cf" fill="#1fb4cf"><rect x="81" y="6" width="5.500" height="5" stroke-width="1"/><rect x="88.500" y="6" width="5.500" height="5" stroke-width="1"/><path d="M87.500,1.500 V3.500 M87.500,13.500 V15.500 M83.500,2.500 L84.500,4 M91.500,2.500 L90.500,4 M83.500,14.500 L84.500,13 M91.500,14.500 L90.500,13" stroke-width="1"/></g>
  <g stroke="#1fb4cf" fill="none"><rect x="114" y="6" width="13" height="5" stroke-width="1.200"/><path d="M118,8.500 H123" stroke-width="1.400"/><rect x="114" y="6" width="3" height="5" fill="#1fb4cf" stroke="none"/><rect x="124" y="6" width="3" height="5" fill="#1fb4cf" stroke="none"/></g>
  <!-- align -->
  <path d="M153.500,2 V15 M151,6 H147 V11 H151 M156,6 H160.500 V11 H156" stroke-width="1.300"/>
  <!-- cover preview -->
  <path d="M180,3 H193 V11 H188 M184,11 H180 V3" stroke-width="1.200"/><circle cx="188.500" cy="10.500" r="2.800" fill="#262629"/><path d="M190.600,12.600 L192.500,14.500"/><path d="M182,5.200 H184 M186,5.200 H188 M190,5.200 H191" stroke-width="1"/>
  <!-- zoom out -->
  <circle cx="210.500" cy="8.500" r="5"/><path d="M208.300,8.500 H212.700 M214.200,12.200 L216,14"/>
  <!-- slider -->
  <path d="M225,8.500 H304" stroke="#2f2f32" stroke-width="1.500"/><path d="M225,8.500 H236" stroke="#e6e6e6" stroke-width="1.500"/><rect x="235" y="4" width="5.500" height="9" rx="2" fill="#f2f2f2" stroke="none"/>
  <!-- zoom in -->
  <circle cx="316.500" cy="8.500" r="5"/><path d="M314.300,8.500 H318.700 M316.500,6.300 V10.700 M320.200,12.200 L322,14"/>
</svg>
<!-- ruler -->
<div class="a" style="left:400.5px;top:394.5px;width:907.5px;height:4.5px;background:repeating-linear-gradient(90deg,#2c2d2f 0,#2c2d2f 1px,rgba(0,0,0,0) 1px,rgba(0,0,0,0) 17.901px)"></div>
<div class="t" style="left:404.0px;top:396.5px;font-size:8px;color:#5a5a5d;">00:00</div>
<div class="a" style="left:578.5px;top:395.5px;width:1px;height:8.5px;background:#5c5c5f"></div>
<div class="t" style="left:583.0px;top:396.5px;font-size:8px;color:#5a5a5d;">00:03</div>
<div class="a" style="left:757.5px;top:395.5px;width:1px;height:8.5px;background:#5c5c5f"></div>
<div class="t" style="left:762.0px;top:396.5px;font-size:8px;color:#5a5a5d;">00:06</div>
<div class="a" style="left:936.5px;top:395.5px;width:1px;height:8.5px;background:#5c5c5f"></div>
<div class="t" style="left:941.0px;top:396.5px;font-size:8px;color:#5a5a5d;">00:09</div>
<div class="a" style="left:1115.5px;top:395.5px;width:1px;height:8.5px;background:#5c5c5f"></div>
<div class="t" style="left:1120.0px;top:396.5px;font-size:8px;color:#5a5a5d;">00:12</div>
<div class="a" style="left:1294.6px;top:395.5px;width:1px;height:8.5px;background:#5c5c5f"></div>
<div class="t" style="left:1299.1px;top:396.5px;font-size:8px;color:#5a5a5d;width:6px;overflow:hidden;">00:15</div>
<!-- track headers -->
<div class="a" style="left:272px;top:478px;width:80px;height:18.500px;border-radius:3px;background:#1f2021"></div>
<div class="a" style="left:272px;top:533px;width:80px;height:18.500px;border-radius:3px;background:#1f2021"></div>
<div class="a" style="left:295.0px;top:480.7px;width:12px;height:12px;border-radius:6px;background:#292a2c"></div>
<div class="a" style="left:314.8px;top:480.7px;width:12px;height:12px;border-radius:6px;background:#292a2c"></div>
<div class="a" style="left:334.7px;top:480.7px;width:12px;height:12px;border-radius:6px;background:#292a2c"></div>
<div class="a" style="left:295.0px;top:536.0px;width:12px;height:12px;border-radius:6px;background:#292a2c"></div>
<div class="a" style="left:334.7px;top:536.0px;width:12px;height:12px;border-radius:6px;background:#292a2c"></div>
<svg style="left:272px;top:478px" width="80" height="75" viewBox="0 0 80 75" fill="none" stroke="#d8d8d8" stroke-width="1" stroke-linejoin="round" stroke-linecap="round">
  <rect x="4.500" y="5.500" width="9" height="6.500" stroke="#6a6a6d" stroke-width=".9"/><path d="M8,7.300 L10.300,8.700 L8,10.100 Z" fill="#6a6a6d" stroke="none"/>
  <rect x="26.300" y="8.300" width="5.400" height="3.900" fill="#d8d8d8" stroke-width=".8"/><path d="M27.400,8.300 V7 A1.600,1.600 0 0 1 30.600,7 V7.600"/><path d="M27.300,10.300 H30.700" stroke="#292a2c" stroke-width="1" stroke-linecap="butt"/>
  <path d="M44.800,8.700 C46.600,5.800 51,5.800 52.800,8.700 C51,11.600 46.600,11.600 44.800,8.700 Z" stroke-width="1.100"/><circle cx="48.800" cy="8.700" r="1.600" fill="#d8d8d8" stroke="none"/>
  <path d="M65.500,7.600 H67 L69,5.800 V11.600 L67,9.800 H65.500 Z" stroke-width=".9"/><path d="M70.600,7.300 V10.100 M72.200,6.200 V11.200" stroke-width=".8"/>
  <circle cx="9" cy="64" r="4.300" stroke="#6a6a6d" stroke-width=".9"/><path d="M9.600,65 V60.800 L11,62" stroke="#6a6a6d" stroke-width=".9"/><circle cx="8.700" cy="65.200" r=".9" fill="#6a6a6d" stroke="none"/>
  <rect x="26.300" y="63.600" width="5.400" height="3.900" fill="#d8d8d8" stroke-width=".8"/><path d="M27.400,63.600 V62.300 A1.600,1.600 0 0 1 30.600,62.300 V63.600"/><path d="M27.300,65.600 H30.700" stroke="#292a2c" stroke-width="1" stroke-linecap="butt"/>
  <path d="M65.500,62.900 H67 L69,61.100 V66.900 L67,65.100 H65.500 Z" stroke-width=".9"/><path d="M70.600,62.600 V65.400 M72.200,61.500 V66.500" stroke-width=".8"/>
</svg>
<div class="a" style="left:362.500px;top:471.500px;width:31px;height:30.500px;border-radius:3px;background:#28292b"></div>
<div class="t" style="left:368px;top:483px;font-size:10px;font-weight:500;color:#e8e8e8">封面</div>
<!-- video clip -->
<div class="a" style="left:401px;top:457px;width:296.500px;height:60px;border-radius:3px;background:#0c4a59;overflow:hidden">
<div class="a" style="left:0;top:1.500px;width:126px;height:12px;background:#155867;border-radius:2px"></div>
<div class="a" style="left:128px;top:1.500px;width:50px;height:12px;background:#155867;border-radius:2px"></div>
<div class="t" style="left:4px;top:3.500px;font-size:8.850px;color:#eaf3f5;letter-spacing:-.1px">微信图片_20230904093055.jpg</div>
<div class="t" style="left:130.500px;top:3.500px;font-size:8.600px;color:#eaf3f5">00:00:05:00</div>
<div class="a" style="left:0;top:14.700px;width:297.500px;height:31px;background:#fff;overflow:hidden">
<div class="a" style="left:0.0px;top:0;width:41.4px;height:32px"><i class="a" style="left:0;top:0;width:41.400px;height:8.500px;background:linear-gradient(90deg,#4a3c2c 0,#5a4a36 12%,#b39a74 20%,#c7b28e 38%,#a88f68 50%,#d5d2c8 58%,#c4c2b8 66%,#5a5348 72%,#3a352e 100%)"></i><i class="a" style="left:.300px;top:4.800px;width:12px;height:3.200px;background:#17140f"></i><i class="a" style="left:36px;top:4.800px;width:5.400px;height:3.200px;background:#17140f"></i><i class="a" style="left:0;top:8px;width:41.4px;height:5px;background:#2a44ae"></i><i class="a" style="left:2px;top:9.600px;width:15px;height:2px;background:#aebbea"></i><i class="a" style="left:19px;top:9.600px;width:15px;height:2px;background:#aebbea"></i><i class="a" style="left:1.500px;top:14.700px;width:6px;height:1.200px;background:#f07a70"></i><i class="a" style="left:1.500px;top:18px;width:34px;height:1.800px;background:#c6e6c1"></i><i class="a" style="left:1.500px;top:20.700px;width:37px;height:2.100px;background:#858585"></i><i class="a" style="left:1.500px;top:24.600px;width:5px;height:1.400px;background:#8d8d8d"></i><i class="a" style="left:7px;top:24.200px;width:8px;height:2.200px;background:#5cc26f"></i><i class="a" style="left:1.500px;top:28.600px;width:25px;height:1px;background:#cfcfcf"></i><i class="a" style="left:40.6px;top:0;width:.8px;height:8.500px;background:#2a2620"></i></div>
<div class="a" style="left:41.4px;top:0;width:41.4px;height:32px"><i class="a" style="left:0;top:0;width:41.400px;height:8.500px;background:linear-gradient(90deg,#4a3c2c 0,#5a4a36 12%,#b39a74 20%,#c7b28e 38%,#a88f68 50%,#d5d2c8 58%,#c4c2b8 66%,#5a5348 72%,#3a352e 100%)"></i><i class="a" style="left:.300px;top:4.800px;width:12px;height:3.200px;background:#17140f"></i><i class="a" style="left:36px;top:4.800px;width:5.400px;height:3.200px;background:#17140f"></i><i class="a" style="left:0;top:8px;width:41.4px;height:5px;background:#2a44ae"></i><i class="a" style="left:2px;top:9.600px;width:15px;height:2px;background:#aebbea"></i><i class="a" style="left:19px;top:9.600px;width:15px;height:2px;background:#aebbea"></i><i class="a" style="left:1.500px;top:14.700px;width:6px;height:1.200px;background:#f07a70"></i><i class="a" style="left:1.500px;top:18px;width:34px;height:1.800px;background:#c6e6c1"></i><i class="a" style="left:1.500px;top:20.700px;width:37px;height:2.100px;background:#858585"></i><i class="a" style="left:1.500px;top:24.600px;width:5px;height:1.400px;background:#8d8d8d"></i><i class="a" style="left:7px;top:24.200px;width:8px;height:2.200px;background:#5cc26f"></i><i class="a" style="left:1.500px;top:28.600px;width:25px;height:1px;background:#cfcfcf"></i><i class="a" style="left:40.6px;top:0;width:.8px;height:8.500px;background:#2a2620"></i></div>
<div class="a" style="left:82.8px;top:0;width:41.4px;height:32px"><i class="a" style="left:0;top:0;width:41.400px;height:8.500px;background:linear-gradient(90deg,#4a3c2c 0,#5a4a36 12%,#b39a74 20%,#c7b28e 38%,#a88f68 50%,#d5d2c8 58%,#c4c2b8 66%,#5a5348 72%,#3a352e 100%)"></i><i class="a" style="left:.300px;top:4.800px;width:12px;height:3.200px;background:#17140f"></i><i class="a" style="left:36px;top:4.800px;width:5.400px;height:3.200px;background:#17140f"></i><i class="a" style="left:0;top:8px;width:41.4px;height:5px;background:#2a44ae"></i><i class="a" style="left:2px;top:9.600px;width:15px;height:2px;background:#aebbea"></i><i class="a" style="left:19px;top:9.600px;width:15px;height:2px;background:#aebbea"></i><i class="a" style="left:1.500px;top:14.700px;width:6px;height:1.200px;background:#f07a70"></i><i class="a" style="left:1.500px;top:18px;width:34px;height:1.800px;background:#c6e6c1"></i><i class="a" style="left:1.500px;top:20.700px;width:37px;height:2.100px;background:#858585"></i><i class="a" style="left:1.500px;top:24.600px;width:5px;height:1.400px;background:#8d8d8d"></i><i class="a" style="left:7px;top:24.200px;width:8px;height:2.200px;background:#5cc26f"></i><i class="a" style="left:1.500px;top:28.600px;width:25px;height:1px;background:#cfcfcf"></i><i class="a" style="left:40.6px;top:0;width:.8px;height:8.500px;background:#2a2620"></i></div>
<div class="a" style="left:124.2px;top:0;width:41.4px;height:32px"><i class="a" style="left:0;top:0;width:41.400px;height:8.500px;background:linear-gradient(90deg,#4a3c2c 0,#5a4a36 12%,#b39a74 20%,#c7b28e 38%,#a88f68 50%,#d5d2c8 58%,#c4c2b8 66%,#5a5348 72%,#3a352e 100%)"></i><i class="a" style="left:.300px;top:4.800px;width:12px;height:3.200px;background:#17140f"></i><i class="a" style="left:36px;top:4.800px;width:5.400px;height:3.200px;background:#17140f"></i><i class="a" style="left:0;top:8px;width:41.4px;height:5px;background:#2a44ae"></i><i class="a" style="left:2px;top:9.600px;width:15px;height:2px;background:#aebbea"></i><i class="a" style="left:19px;top:9.600px;width:15px;height:2px;background:#aebbea"></i><i class="a" style="left:1.500px;top:14.700px;width:6px;height:1.200px;background:#f07a70"></i><i class="a" style="left:1.500px;top:18px;width:34px;height:1.800px;background:#c6e6c1"></i><i class="a" style="left:1.500px;top:20.700px;width:37px;height:2.100px;background:#858585"></i><i class="a" style="left:1.500px;top:24.600px;width:5px;height:1.400px;background:#8d8d8d"></i><i class="a" style="left:7px;top:24.200px;width:8px;height:2.200px;background:#5cc26f"></i><i class="a" style="left:1.500px;top:28.600px;width:25px;height:1px;background:#cfcfcf"></i><i class="a" style="left:40.6px;top:0;width:.8px;height:8.500px;background:#2a2620"></i></div>
<div class="a" style="left:165.6px;top:0;width:41.4px;height:32px"><i class="a" style="left:0;top:0;width:41.400px;height:8.500px;background:linear-gradient(90deg,#4a3c2c 0,#5a4a36 12%,#b39a74 20%,#c7b28e 38%,#a88f68 50%,#d5d2c8 58%,#c4c2b8 66%,#5a5348 72%,#3a352e 100%)"></i><i class="a" style="left:.300px;top:4.800px;width:12px;height:3.200px;background:#17140f"></i><i class="a" style="left:36px;top:4.800px;width:5.400px;height:3.200px;background:#17140f"></i><i class="a" style="left:0;top:8px;width:41.4px;height:5px;background:#2a44ae"></i><i class="a" style="left:2px;top:9.600px;width:15px;height:2px;background:#aebbea"></i><i class="a" style="left:19px;top:9.600px;width:15px;height:2px;background:#aebbea"></i><i class="a" style="left:1.500px;top:14.700px;width:6px;height:1.200px;background:#f07a70"></i><i class="a" style="left:1.500px;top:18px;width:34px;height:1.800px;background:#c6e6c1"></i><i class="a" style="left:1.500px;top:20.700px;width:37px;height:2.100px;background:#858585"></i><i class="a" style="left:1.500px;top:24.600px;width:5px;height:1.400px;background:#8d8d8d"></i><i class="a" style="left:7px;top:24.200px;width:8px;height:2.200px;background:#5cc26f"></i><i class="a" style="left:1.500px;top:28.600px;width:25px;height:1px;background:#cfcfcf"></i><i class="a" style="left:40.6px;top:0;width:.8px;height:8.500px;background:#2a2620"></i></div>
<div class="a" style="left:207.0px;top:0;width:41.4px;height:32px"><i class="a" style="left:0;top:0;width:41.400px;height:8.500px;background:linear-gradient(90deg,#4a3c2c 0,#5a4a36 12%,#b39a74 20%,#c7b28e 38%,#a88f68 50%,#d5d2c8 58%,#c4c2b8 66%,#5a5348 72%,#3a352e 100%)"></i><i class="a" style="left:.300px;top:4.800px;width:12px;height:3.200px;background:#17140f"></i><i class="a" style="left:36px;top:4.800px;width:5.400px;height:3.200px;background:#17140f"></i><i class="a" style="left:0;top:8px;width:41.4px;height:5px;background:#2a44ae"></i><i class="a" style="left:2px;top:9.600px;width:15px;height:2px;background:#aebbea"></i><i class="a" style="left:19px;top:9.600px;width:15px;height:2px;background:#aebbea"></i><i class="a" style="left:1.500px;top:14.700px;width:6px;height:1.200px;background:#f07a70"></i><i class="a" style="left:1.500px;top:18px;width:34px;height:1.800px;background:#c6e6c1"></i><i class="a" style="left:1.500px;top:20.700px;width:37px;height:2.100px;background:#858585"></i><i class="a" style="left:1.500px;top:24.600px;width:5px;height:1.400px;background:#8d8d8d"></i><i class="a" style="left:7px;top:24.200px;width:8px;height:2.200px;background:#5cc26f"></i><i class="a" style="left:1.500px;top:28.600px;width:25px;height:1px;background:#cfcfcf"></i><i class="a" style="left:40.6px;top:0;width:.8px;height:8.500px;background:#2a2620"></i></div>
<div class="a" style="left:248.4px;top:0;width:41.4px;height:32px"><i class="a" style="left:0;top:0;width:41.400px;height:8.500px;background:linear-gradient(90deg,#4a3c2c 0,#5a4a36 12%,#b39a74 20%,#c7b28e 38%,#a88f68 50%,#d5d2c8 58%,#c4c2b8 66%,#5a5348 72%,#3a352e 100%)"></i><i class="a" style="left:.300px;top:4.800px;width:12px;height:3.200px;background:#17140f"></i><i class="a" style="left:36px;top:4.800px;width:5.400px;height:3.200px;background:#17140f"></i><i class="a" style="left:0;top:8px;width:41.4px;height:5px;background:#2a44ae"></i><i class="a" style="left:2px;top:9.600px;width:15px;height:2px;background:#aebbea"></i><i class="a" style="left:19px;top:9.600px;width:15px;height:2px;background:#aebbea"></i><i class="a" style="left:1.500px;top:14.700px;width:6px;height:1.200px;background:#f07a70"></i><i class="a" style="left:1.500px;top:18px;width:34px;height:1.800px;background:#c6e6c1"></i><i class="a" style="left:1.500px;top:20.700px;width:37px;height:2.100px;background:#858585"></i><i class="a" style="left:1.500px;top:24.600px;width:5px;height:1.400px;background:#8d8d8d"></i><i class="a" style="left:7px;top:24.200px;width:8px;height:2.200px;background:#5cc26f"></i><i class="a" style="left:1.500px;top:28.600px;width:25px;height:1px;background:#cfcfcf"></i><i class="a" style="left:40.6px;top:0;width:.8px;height:8.500px;background:#2a2620"></i></div>
<div class="a" style="left:289.8px;top:0;width:41.4px;height:32px"><i class="a" style="left:0;top:0;width:41.400px;height:8.500px;background:linear-gradient(90deg,#4a3c2c 0,#5a4a36 12%,#b39a74 20%,#c7b28e 38%,#a88f68 50%,#d5d2c8 58%,#c4c2b8 66%,#5a5348 72%,#3a352e 100%)"></i><i class="a" style="left:.300px;top:4.800px;width:12px;height:3.200px;background:#17140f"></i><i class="a" style="left:36px;top:4.800px;width:5.400px;height:3.200px;background:#17140f"></i><i class="a" style="left:0;top:8px;width:41.4px;height:5px;background:#2a44ae"></i><i class="a" style="left:2px;top:9.600px;width:15px;height:2px;background:#aebbea"></i><i class="a" style="left:19px;top:9.600px;width:15px;height:2px;background:#aebbea"></i><i class="a" style="left:1.500px;top:14.700px;width:6px;height:1.200px;background:#f07a70"></i><i class="a" style="left:1.500px;top:18px;width:34px;height:1.800px;background:#c6e6c1"></i><i class="a" style="left:1.500px;top:20.700px;width:37px;height:2.100px;background:#858585"></i><i class="a" style="left:1.500px;top:24.600px;width:5px;height:1.400px;background:#8d8d8d"></i><i class="a" style="left:7px;top:24.200px;width:8px;height:2.200px;background:#5cc26f"></i><i class="a" style="left:1.500px;top:28.600px;width:25px;height:1px;background:#cfcfcf"></i><i class="a" style="left:40.6px;top:0;width:.8px;height:8.500px;background:#2a2620"></i></div>
</div></div>
<!-- audio clip -->
<div class="a" style="left:401px;top:522.500px;width:402px;height:39px;border-radius:3px;background:#0b4266;overflow:hidden">
<div class="a" style="left:0;top:1.200px;width:107px;height:11px;background:#14527a;border-radius:2px"></div>
<svg style="left:3.500px;top:3px" width="10" height="8" viewBox="0 0 10 8" fill="none" stroke="#e8f0f5" stroke-width=".9"><rect x=".6" y=".6" width="8.800" height="6.800" rx="1"/><path d="M2.300,5.600 L3.600,2.400 L4.900,5.600 M2.800,4.600 H4.400 M6,3 H8 M6,5.400 H8" stroke-width=".8"/></svg>
<div class="t" style="left:15.800px;top:2.800px;font-size:8.200px;color:#e8f0f5">发货撒娇开发商可交付...</div>
<svg style="left:0;top:0" width="402" height="39" viewBox="0 0 402 39"><path d="M3,38.5 L3.5,26.5 L5.5,23.5 L7.5,22.5 L9.5,23.5 L11.5,30.5 L13.5,32.5 L15.5,25.5 L17.5,19.5 L19.5,19.5 L21.5,19.5 L23.5,21.5 L25.5,29.5 L27.5,35.5 L29.5,35.5 L31.5,35.5 L33.5,23.5 L35.5,21.5 L37.5,23.5 L39.5,35.5 L41.5,29.5 L43.5,27.5 L45.5,27.5 L47.5,31.5 L49.5,35.5 L51.5,26.5 L53.5,21.5 L55.5,21.5 L57.5,27.5 L59.5,33.5 L61.5,28.5 L63.5,26.5 L65.5,27.5 L67.5,31.5 L69.5,35.5 L71.5,28.5 L73.5,24.5 L75.5,25.5 L77.5,33.5 L79.5,24.5 L81.5,22.5 L83.5,23.5 L85.5,28.5 L87.5,26.5 L89.5,24.5 L91.5,25.5 L93.5,28.5 L95.5,35.5 L97.5,35.5 L99.5,29.5 L101.5,25.5 L103.5,25.5 L105.5,27.5 L107.5,28.5 L109.5,24.5 L111.5,24.5 L113.5,24.5 L115.5,27.5 L117.5,32.5 L119.5,35.5 L121.5,30.5 L123.5,27.5 L125.5,25.5 L127.5,25.5 L129.5,26.5 L131.5,30.5 L133.5,35.5 L135.5,35.5 L137.5,34.5 L139.5,26.5 L141.5,23.5 L143.5,25.5 L145.5,30.5 L147.5,28.5 L149.5,25.5 L151.5,23.5 L153.5,24.5 L155.5,28.5 L157.5,29.5 L159.5,26.5 L161.5,23.5 L163.5,23.5 L165.5,26.5 L167.5,29.5 L169.5,35.5 L171.5,35.5 L173.5,30.5 L175.5,24.5 L177.5,23.5 L179.5,23.5 L181.5,25.5 L183.5,29.5 L185.5,33.5 L187.5,27.5 L189.5,25.5 L191.5,26.5 L193.5,30.5 L195.5,30.5 L197.5,20.5 L199.5,19.5 L201.5,19.5 L203.5,28.5 L205.5,29.5 L207.5,24.5 L209.5,23.5 L211.5,24.5 L213.5,28.5 L215.5,32.5 L217.5,25.5 L219.5,24.5 L221.5,25.5 L223.5,30.5 L225.5,31.5 L227.5,22.5 L229.5,20.5 L231.5,22.5 L233.5,29.5 L235.5,32.5 L237.5,25.5 L239.5,23.5 L241.5,26.5 L243.5,35.5 L245.5,35.5 L247.5,25.5 L249.5,23.5 L251.5,25.5 L253.5,35.5 L255.5,26.5 L257.5,21.5 L259.5,23.5 L261.5,30.5 L263.5,27.5 L265.5,27.5 L267.5,27.5 L269.5,31.5 L271.5,29.5 L273.5,22.5 L275.5,18.5 L277.5,18.5 L279.5,20.5 L281.5,28.5 L283.5,35.5 L285.5,35.5 L287.5,29.5 L289.5,25.5 L291.5,25.5 L293.5,28.5 L295.5,29.5 L297.5,25.5 L299.5,22.5 L301.5,21.5 L303.5,24.5 L305.5,28.5 L307.5,35.5 L309.5,30.5 L311.5,24.5 L313.5,23.5 L315.5,22.5 L317.5,24.5 L319.5,29.5 L321.5,35.5 L323.5,35.5 L325.5,34.5 L327.5,24.5 L329.5,22.5 L331.5,24.5 L333.5,35.5 L335.5,32.5 L337.5,26.5 L339.5,27.5 L341.5,30.5 L343.5,24.5 L345.5,22.5 L347.5,22.5 L349.5,27.5 L351.5,35.5 L353.5,34.5 L355.5,24.5 L357.5,18.5 L359.5,19.5 L361.5,26.5 L363.5,26.5 L365.5,24.5 L367.5,22.5 L369.5,25.5 L371.5,30.5 L373.5,35.5 L375.5,28.5 L377.5,25.5 L379.5,26.5 L381.5,34.5 L383.5,25.5 L385.5,21.5 L387.5,20.5 L389.5,26.5 L391.5,32.5 L393.5,20.5 L395.5,18.5 L397.5,24.5 L397.5,38.5Z" fill="#124f7c"/><path d="M3.5,38.5V26.5M5.5,38.5V23.5M7.5,38.5V22.5M9.5,38.5V23.5M11.5,38.5V30.5M13.5,38.5V32.5M15.5,38.5V25.5M17.5,38.5V19.5M19.5,38.5V19.5M21.5,38.5V19.5M23.5,38.5V21.5M25.5,38.5V29.5M27.5,38.5V35.5M29.5,38.5V35.5M31.5,38.5V35.5M33.5,38.5V23.5M35.5,38.5V21.5M37.5,38.5V23.5M39.5,38.5V35.5M41.5,38.5V29.5M43.5,38.5V27.5M45.5,38.5V27.5M47.5,38.5V31.5M49.5,38.5V35.5M51.5,38.5V26.5M53.5,38.5V21.5M55.5,38.5V21.5M57.5,38.5V27.5M59.5,38.5V33.5M61.5,38.5V28.5M63.5,38.5V26.5M65.5,38.5V27.5M67.5,38.5V31.5M69.5,38.5V35.5M71.5,38.5V28.5M73.5,38.5V24.5M75.5,38.5V25.5M77.5,38.5V33.5M79.5,38.5V24.5M81.5,38.5V22.5M83.5,38.5V23.5M85.5,38.5V28.5M87.5,38.5V26.5M89.5,38.5V24.5M91.5,38.5V25.5M93.5,38.5V28.5M95.5,38.5V35.5M97.5,38.5V35.5M99.5,38.5V29.5M101.5,38.5V25.5M103.5,38.5V25.5M105.5,38.5V27.5M107.5,38.5V28.5M109.5,38.5V24.5M111.5,38.5V24.5M113.5,38.5V24.5M115.5,38.5V27.5M117.5,38.5V32.5M119.5,38.5V35.5M121.5,38.5V30.5M123.5,38.5V27.5M125.5,38.5V25.5M127.5,38.5V25.5M129.5,38.5V26.5M131.5,38.5V30.5M133.5,38.5V35.5M135.5,38.5V35.5M137.5,38.5V34.5M139.5,38.5V26.5M141.5,38.5V23.5M143.5,38.5V25.5M145.5,38.5V30.5M147.5,38.5V28.5M149.5,38.5V25.5M151.5,38.5V23.5M153.5,38.5V24.5M155.5,38.5V28.5M157.5,38.5V29.5M159.5,38.5V26.5M161.5,38.5V23.5M163.5,38.5V23.5M165.5,38.5V26.5M167.5,38.5V29.5M169.5,38.5V35.5M171.5,38.5V35.5M173.5,38.5V30.5M175.5,38.5V24.5M177.5,38.5V23.5M179.5,38.5V23.5M181.5,38.5V25.5M183.5,38.5V29.5M185.5,38.5V33.5M187.5,38.5V27.5M189.5,38.5V25.5M191.5,38.5V26.5M193.5,38.5V30.5M195.5,38.5V30.5M197.5,38.5V20.5M199.5,38.5V19.5M201.5,38.5V19.5M203.5,38.5V28.5M205.5,38.5V29.5M207.5,38.5V24.5M209.5,38.5V23.5M211.5,38.5V24.5M213.5,38.5V28.5M215.5,38.5V32.5M217.5,38.5V25.5M219.5,38.5V24.5M221.5,38.5V25.5M223.5,38.5V30.5M225.5,38.5V31.5M227.5,38.5V22.5M229.5,38.5V20.5M231.5,38.5V22.5M233.5,38.5V29.5M235.5,38.5V32.5M237.5,38.5V25.5M239.5,38.5V23.5M241.5,38.5V26.5M243.5,38.5V35.5M245.5,38.5V35.5M247.5,38.5V25.5M249.5,38.5V23.5M251.5,38.5V25.5M253.5,38.5V35.5M255.5,38.5V26.5M257.5,38.5V21.5M259.5,38.5V23.5M261.5,38.5V30.5M263.5,38.5V27.5M265.5,38.5V27.5M267.5,38.5V27.5M269.5,38.5V31.5M271.5,38.5V29.5M273.5,38.5V22.5M275.5,38.5V18.5M277.5,38.5V18.5M279.5,38.5V20.5M281.5,38.5V28.5M283.5,38.5V35.5M285.5,38.5V35.5M287.5,38.5V29.5M289.5,38.5V25.5M291.5,38.5V25.5M293.5,38.5V28.5M295.5,38.5V29.5M297.5,38.5V25.5M299.5,38.5V22.5M301.5,38.5V21.5M303.5,38.5V24.5M305.5,38.5V28.5M307.5,38.5V35.5M309.5,38.5V30.5M311.5,38.5V24.5M313.5,38.5V23.5M315.5,38.5V22.5M317.5,38.5V24.5M319.5,38.5V29.5M321.5,38.5V35.5M323.5,38.5V35.5M325.5,38.5V34.5M327.5,38.5V24.5M329.5,38.5V22.5M331.5,38.5V24.5M333.5,38.5V35.5M335.5,38.5V32.5M337.5,38.5V26.5M339.5,38.5V27.5M341.5,38.5V30.5M343.5,38.5V24.5M345.5,38.5V22.5M347.5,38.5V22.5M349.5,38.5V27.5M351.5,38.5V35.5M353.5,38.5V34.5M355.5,38.5V24.5M357.5,38.5V18.5M359.5,38.5V19.5M361.5,38.5V26.5M363.5,38.5V26.5M365.5,38.5V24.5M367.5,38.5V22.5M369.5,38.5V25.5M371.5,38.5V30.5M373.5,38.5V35.5M375.5,38.5V28.5M377.5,38.5V25.5M379.5,38.5V26.5M381.5,38.5V34.5M383.5,38.5V25.5M385.5,38.5V21.5M387.5,38.5V20.5M389.5,38.5V26.5M391.5,38.5V32.5M393.5,38.5V20.5M395.5,38.5V18.5M397.5,38.5V24.5" stroke="#3088c0" stroke-width="1" fill="none" shape-rendering="crispEdges"/><path d="M2,28.800H400" stroke="#4b9bcc" stroke-width=".6"/><rect x="274.8" y="17.5" width="1.4" height="1.6" fill="#e0a03a"/><rect x="276.8" y="17.5" width="1.4" height="1.6" fill="#e0a03a"/><rect x="356.8" y="17.5" width="1.4" height="1.6" fill="#e0a03a"/><rect x="394.8" y="17.5" width="1.4" height="1.6" fill="#e0a03a"/></svg>
</div>
<!-- playhead + cursor -->
<div class="a" style="left:399.500px;top:400px;width:1.500px;height:199px;background:#e8e8e8"></div>
<div class="a" style="left:396px;top:393px;width:8.500px;height:11px;border:1.500px solid #f0f0f0;border-radius:2px 2px 4.500px 4.500px;background:#1b1c1d"></div>
<svg style="left:436px;top:445.500px" width="12" height="17" viewBox="0 0 12 17"><path d="M1,1 V13.200 L3.900,10.600 L6,15.500 L8.200,14.500 L6.100,9.800 H10 Z" fill="#f4f4f4" stroke="#1b1c1d" stroke-width=".8" stroke-linejoin="round"/></svg>
</div>
</body>
</html>
